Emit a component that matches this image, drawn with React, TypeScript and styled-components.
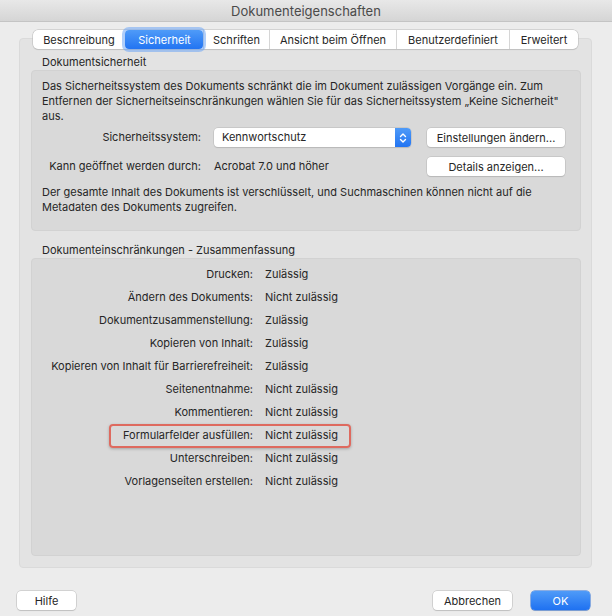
import React from 'react';
import styled, { createGlobalStyle } from 'styled-components';

const GlobalStyle = createGlobalStyle`
  html, body {
    margin: 0;
    padding: 0;
    background: #ececec;
  }
  body {
    font-family: Inter, "Noto Sans", sans-serif;
    font-size: 11px;
    color: #262626;
    -webkit-font-smoothing: antialiased;
  }
`;

const Window = styled.div`
  width: 612px;
  height: 616px;
  background: #ececec;
  display: flex;
  flex-direction: column;
  border-radius: 0 0 6px 6px;
  overflow: hidden;
  box-sizing: border-box;
`;

const TitleBar = styled.div`
  flex: none;
  height: 22px;
  display: flex;
  align-items: center;
  justify-content: center;
  background: linear-gradient(#e8e8e8, #d5d5d5);
  border-bottom: 1px solid #c4c4c4;
  color: #4a4a4a;
  font-size: 13px;
  box-sizing: border-box;
`;

const Content = styled.div`
  display: flex;
  flex-direction: column;
  align-items: center;
  padding: 8px 20px 0 19px;
`;

const TabBar = styled.div`
  display: flex;
  height: 19px;
  position: relative;
  z-index: 1;
  background: #fff;
  border-radius: 5px;
  box-shadow: 0 0 0 0.5px #b9b9b9, 0 1px 1px rgba(0, 0, 0, 0.12);
`;

const Tab = styled.div<{ $active?: boolean; $w: number }>`
  width: ${(p) => p.$w}px;
  display: flex;
  align-items: center;
  justify-content: center;
  box-sizing: border-box;
  white-space: nowrap;
  color: ${(p) => (p.$active ? '#fff' : '#262626')};
  border-left: 1px solid ${(p) => (p.$active ? 'transparent' : '#d6d6d6')};
  background: ${(p) => (p.$active ? 'linear-gradient(#4f9bf8, #2274f2)' : 'transparent')};
  border-radius: ${(p) => (p.$active ? '4px' : '0')};
  box-shadow: ${(p) => (p.$active ? '0 0 0 3px rgba(110, 165, 245, 0.55)' : 'none')};
  position: relative;
  z-index: ${(p) => (p.$active ? 2 : 0)};

  &:first-child {
    border-left: none;
  }
`;

const Panel = styled.div`
  align-self: stretch;
  height: 530px;
  margin-top: -11px;
  background: #e3e3e3;
  border: 1px solid #dadada;
  border-radius: 4px;
  padding: 15px 10px 11px 11px;
  box-sizing: border-box;
  display: flex;
  flex-direction: column;
`;

const SectionLabel = styled.div`
  line-height: 16px;
  padding-left: 11px;
`;

const Box = styled.div<{ $grow?: boolean }>`
  background: #d9d9d9;
  border: 1px solid #d2d2d2;
  border-radius: 4px;
  box-sizing: border-box;
  ${(p) => (p.$grow ? 'flex: 1;' : '')}
`;

const SecurityBox = styled(Box)`
  padding: 8px 10px 15px 10px;
  margin-bottom: 11px;
`;

const Para = styled.p`
  margin: 0;
  line-height: 15px;
`;

const FormGrid = styled.div`
  display: grid;
  grid-template-columns: 159px 197px 141px;
  column-gap: 13px;
  row-gap: 10px;
  margin: 4px 0 9px;

  & > :nth-child(3n) {
    margin-left: 3px;
  }
`;

const FieldLabel = styled.div`
  text-align: right;
  line-height: 19px;
  white-space: nowrap;
`;

const FieldValue = styled.div`
  line-height: 19px;
  white-space: nowrap;
`;

const Select = styled.div`
  height: 19px;
  display: flex;
  align-items: stretch;
  background: #fff;
  border-radius: 4px;
  box-shadow: 0 0 0 0.5px #b8b8b8, 0 1px 1px rgba(0, 0, 0, 0.15);
  overflow: hidden;
`;

const SelectText = styled.div`
  flex: 1;
  padding-left: 8px;
  line-height: 19px;
`;

const Stepper = styled.div`
  width: 16px;
  display: flex;
  align-items: center;
  justify-content: center;
  background: linear-gradient(#4f9bf8, #2274f2);
`;

const Button = styled.div<{ $w?: number; $primary?: boolean }>`
  height: 19px;
  ${(p) => (p.$w ? `width: ${p.$w}px;` : '')}
  display: flex;
  align-items: center;
  justify-content: center;
  white-space: nowrap;
  border-radius: 4px;
  box-sizing: border-box;
  background: ${(p) => (p.$primary ? 'linear-gradient(#4f9bf8, #1f71f1)' : '#fff')};
  color: ${(p) => (p.$primary ? '#fff' : '#262626')};
  box-shadow: ${(p) =>
    p.$primary
      ? '0 0 0 0.5px #2a6fd8, 0 1px 1px rgba(0, 0, 0, 0.15)'
      : '0 0 0 0.5px #b8b8b8, 0 1px 1px rgba(0, 0, 0, 0.15)'};
`;

const SummaryBox = styled(Box)`
  padding: 3px 0 0 0;
`;

const SummaryRow = styled.div<{ $marked?: boolean }>`
  display: grid;
  grid-template-columns: 221px 1fr;
  column-gap: 12px;
  height: 23px;
  align-items: center;
  position: relative;
  white-space: nowrap;

  &::after {
    content: '';
    display: ${(p) => (p.$marked ? 'block' : 'none')};
    position: absolute;
    left: 77px;
    width: 242px;
    top: 1px;
    bottom: -2px;
    border: 2px solid #de6a5f;
    border-radius: 4px;
    box-sizing: border-box;
    box-shadow: 0 1px 3px rgba(0, 0, 0, 0.25);
  }
`;

const SummaryLabel = styled.div`
  text-align: right;
`;

const Footer = styled.div`
  display: flex;
  align-items: center;
  padding: 23px 22px 0 17px;
  gap: 19px;
`;

const Spacer = styled.div`
  flex: 1;
`;

const restrictions: Array<[string, string, boolean?]> = [
  ['Drucken:', 'Zulässig'],
  ['Ändern des Dokuments:', 'Nicht zulässig'],
  ['Dokumentzusammenstellung:', 'Zulässig'],
  ['Kopieren von Inhalt:', 'Zulässig'],
  ['Kopieren von Inhalt für Barrierefreiheit:', 'Zulässig'],
  ['Seitenentnahme:', 'Nicht zulässig'],
  ['Kommentieren:', 'Nicht zulässig'],
  ['Formularfelder ausfüllen:', 'Nicht zulässig', true],
  ['Unterschreiben:', 'Nicht zulässig'],
  ['Vorlagenseiten erstellen:', 'Nicht zulässig'],
];

const tabs: Array<[string, number]> = [
  ['Beschreibung', 92],
  ['Sicherheit', 78],
  ['Schriften', 66],
  ['Ansicht beim Öffnen', 127],
  ['Benutzerdefiniert', 113],
  ['Erweitert', 69],
];

const App = () => {
  return (
    <>
      <GlobalStyle />
      <Window>
        <TitleBar>Dokumenteigenschaften</TitleBar>
        <Content>
          <TabBar>
            {tabs.map(([name, w]) => (
              <Tab key={name} $w={w} $active={name === 'Sicherheit'}>
                {name}
              </Tab>
            ))}
          </TabBar>
          <Panel>
            <SectionLabel>Dokumentsicherheit</SectionLabel>
            <SecurityBox>
              <Para>
                Das Sicherheitssystem des Dokuments schränkt die im Dokument zulässigen Vorgänge ein. Zum
                Entfernen der Sicherheitseinschränkungen wählen Sie für das Sicherheitssystem „Keine Sicherheit"
                aus.
              </Para>
              <FormGrid>
                <FieldLabel>Sicherheitssystem:</FieldLabel>
                <Select>
                  <SelectText>Kennwortschutz</SelectText>
                  <Stepper>
                    <svg width="8" height="12" viewBox="0 0 8 12">
                      <path d="M1.5 4.5 L4 2 L6.5 4.5 M1.5 7.5 L4 10 L6.5 7.5" stroke="#fff" strokeWidth="1.4" fill="none" strokeLinecap="round" strokeLinejoin="round" />
                    </svg>
                  </Stepper>
                </Select>
                <Button>Einstellungen ändern...</Button>
                <FieldLabel>Kann geöffnet werden durch:</FieldLabel>
                <FieldValue>Acrobat 7.0 und höher</FieldValue>
                <Button>Details anzeigen...</Button>
              </FormGrid>
              <Para>
                Der gesamte Inhalt des Dokuments ist verschlüsselt, und Suchmaschinen können nicht auf die
                Metadaten des Dokuments zugreifen.
              </Para>
            </SecurityBox>
            <SectionLabel>Dokumenteinschränkungen - Zusammenfassung</SectionLabel>
            <SummaryBox $grow>
              {restrictions.map(([label, value, marked]) => (
                <SummaryRow key={label} $marked={marked}>
                  <SummaryLabel>{label}</SummaryLabel>
                  <div>{value}</div>
                </SummaryRow>
              ))}
            </SummaryBox>
          </Panel>
        </Content>
        <Footer>
          <Button $w={59}>Hilfe</Button>
          <Spacer />
          <Button $w={79}>Abbrechen</Button>
          <Button $w={59} $primary>OK</Button>
        </Footer>
      </Window>
    </>
  );
};

export default App;
